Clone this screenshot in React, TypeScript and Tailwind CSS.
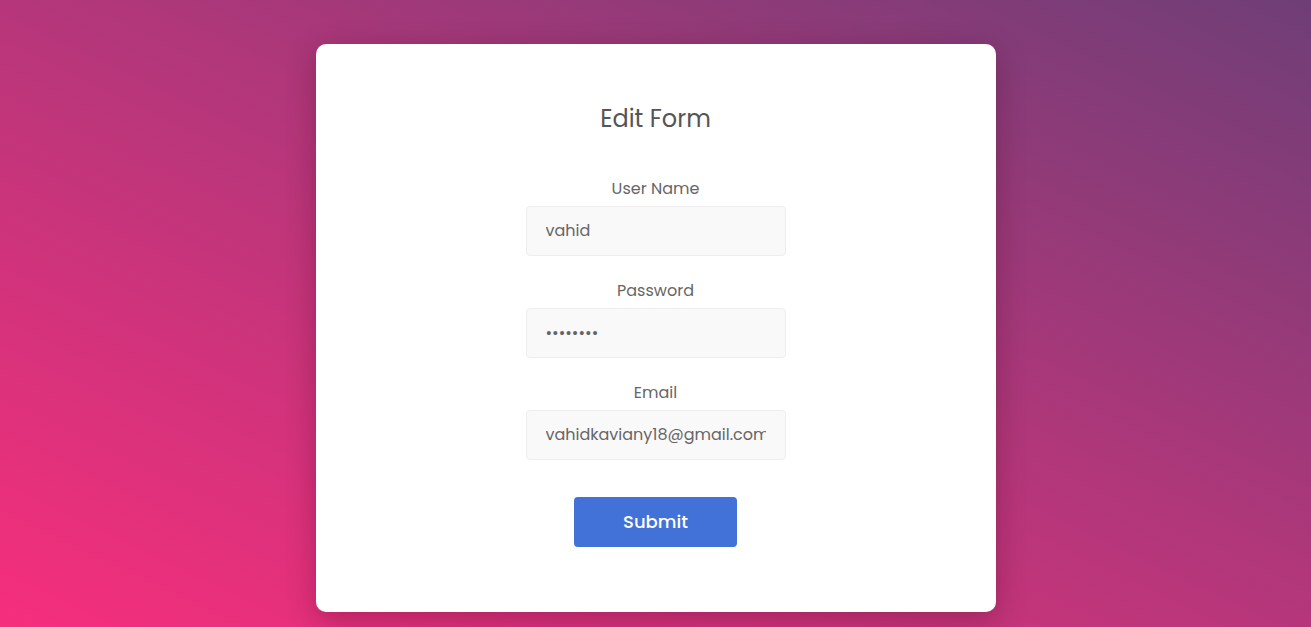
import { useState } from 'react';

const fields = [
  { label: 'User Name', type: 'text', value: 'vahid' },
  { label: 'Password', type: 'password', value: 'vahid123' },
  { label: 'Email', type: 'email', value: 'vahidkaviany18@gmail.com' },
];

const App = () => {
  const [values, setValues] = useState(fields.map((f) => f.value));

  return (
    <div className="min-h-[627px] w-full overflow-hidden bg-[linear-gradient(to_top_right,#f62e7c,#b6367a_50%,#6f3e77)] pt-[44px] font-['Poppins','Inter',sans-serif]">
      <div className="mx-auto flex h-[568px] w-[680px] flex-col items-center rounded-[10px] bg-white pt-[59px] shadow-[0_8px_30px_rgba(60,0,30,0.3)]">
        <h1 className="text-[24px] leading-[32px] text-[#555]">Edit Form</h1>
        <form className="mt-[42px] flex flex-col items-center gap-[23px]" onSubmit={(e) => e.preventDefault()}>
          {fields.map((f, i) => (
            <div key={f.label} className="flex flex-col items-center gap-[5px]">
              <label className="text-[16px] leading-[24px] text-[#666]">{f.label}</label>
              <input
                type={f.type}
                value={values[i]}
                onChange={(e) => {
                  const next = [...values];
                  next[i] = e.target.value;
                  setValues(next);
                }}
                className="h-[50px] w-[260px] rounded-[4px] border border-[#eeeeee] bg-[#f9f9f9] px-[19px] pb-[2px] text-[16px] text-[#666] outline-none"
              />
            </div>
          ))}
          <button
            type="submit"
            className="mt-[14px] h-[50px] w-[163px] rounded-[4px] bg-[#4272d7] pb-[2px] text-[18px] font-medium text-white"
          >
            Submit
          </button>
        </form>
      </div>
    </div>
  );
};

export default App;
